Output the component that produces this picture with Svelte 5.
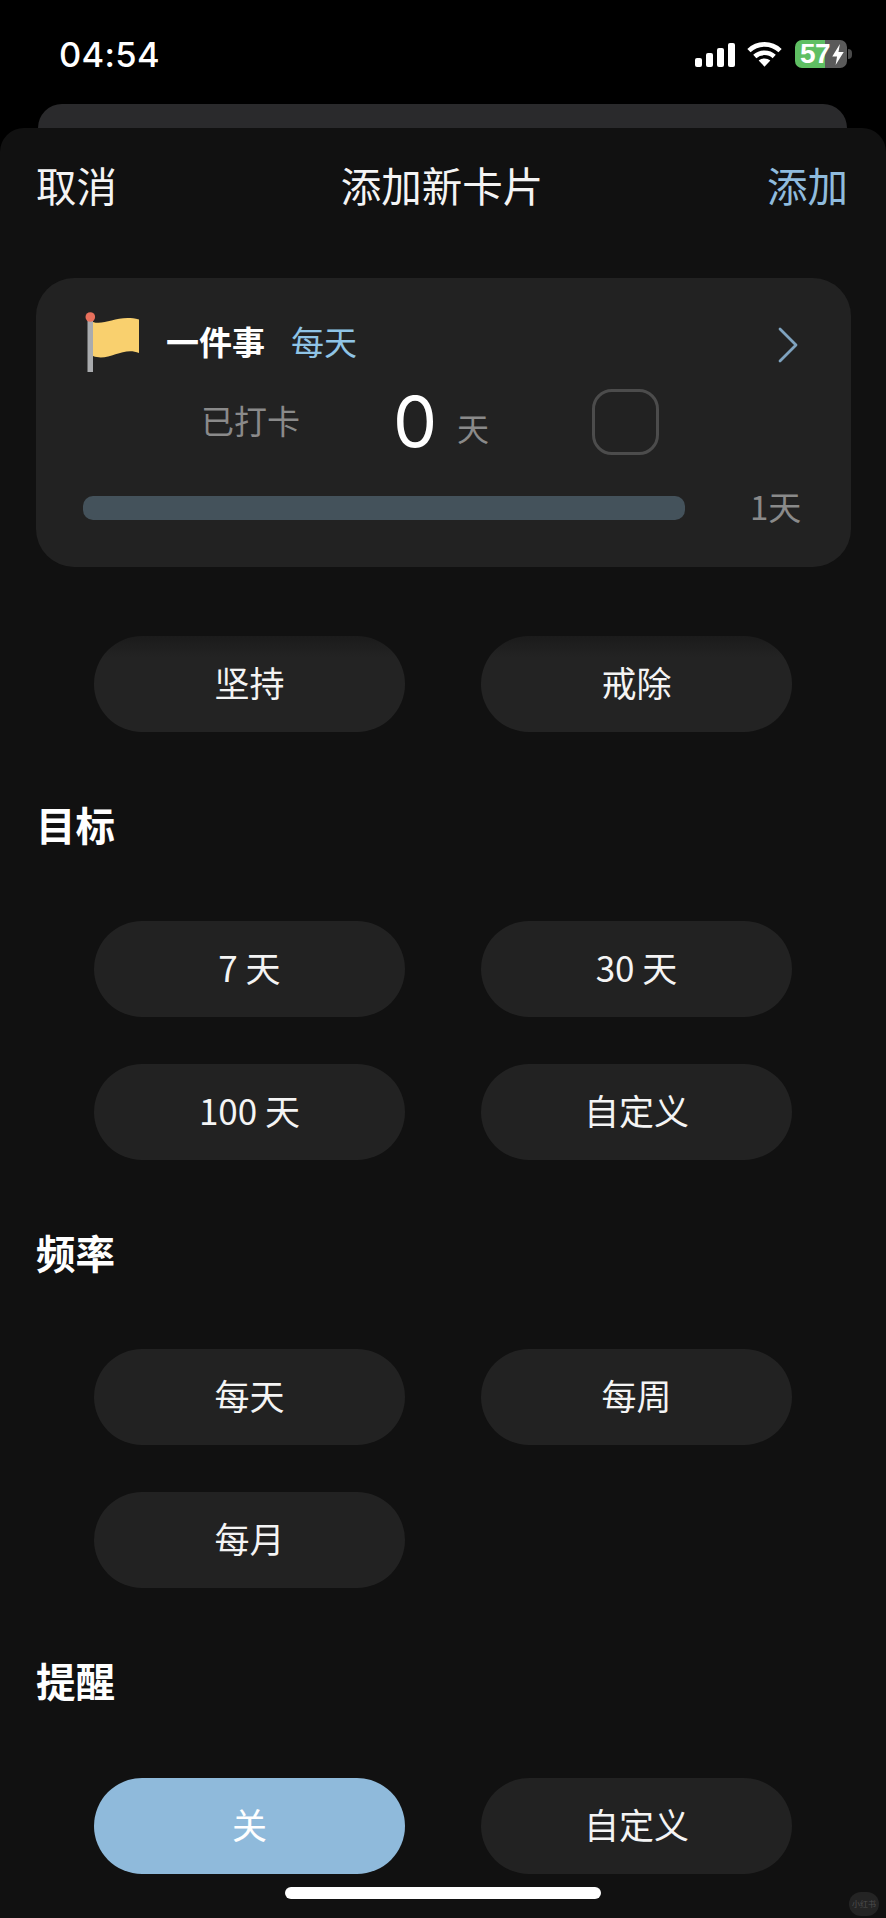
<script>
	const kinds = [{ label: "坚持" }, { label: "戒除" }];
	const sections = [
		{ title: "目标", options: [{ label: "7天", spaced: "7 天" }, { label: "30天", spaced: "30 天" }, { label: "100天", spaced: "100 天" }, { label: "自定义" }] },
		{ title: "频率", options: [{ label: "每天" }, { label: "每周" }, { label: "每月" }] },
		{ title: "提醒", options: [{ label: "关", active: true }, { label: "自定义" }] }
	];
</script>

<div class="screen">
	<header class="status">
		<span class="time">04:54</span>
		<div class="status-icons">
			<svg class="signal" viewBox="0 0 40 24" width="40" height="24" fill="#fff">
				<rect x="0" y="15" width="7" height="9" rx="2" />
				<rect x="11" y="10" width="7" height="14" rx="2" />
				<rect x="22" y="5" width="7" height="19" rx="2" />
				<rect x="33" y="0" width="7" height="24" rx="2" />
			</svg>
			<svg class="wifi" viewBox="0 0 36 26" width="35" height="26" fill="none" stroke="#fff" stroke-width="4.800">
				<path d="M2 9.500C11 1 25 1 34 9.500" />
				<path d="M8 15.500C13.500 10.500 22.500 10.500 28 15.500" />
				<path d="M18 26l-6-6.300c3.400-2.800 8.600-2.800 12 0z" fill="#fff" stroke="none" />
			</svg>
			<div class="battery">
				<div class="battery-body">
					<span class="battery-level">57</span>
					<svg class="bolt" viewBox="0 0 12 22" width="12" height="21" fill="#fff">
						<path d="M8 0L0 13h5l-1.500 9L12 8.500H6.500z" />
					</svg>
				</div>
				<span class="battery-nub"></span>
			</div>
		</div>
	</header>

	<div class="back-card"></div>

	<main class="sheet">
		<nav class="nav">
			<span>取消</span>
			<span>添加新卡片</span>
			<span class="accent">添加</span>
		</nav>

		<section class="card">
			<div class="card-head">
				<svg class="flag" viewBox="0 0 56 60" width="56" height="60">
					<rect x="2.500" y="5" width="5.500" height="55" fill="#a9abae" />
					<path d="M8 10C20 14 33 2 54 7.500V41C38 34 24 50 8 44z" fill="#f9d06e" />
					<circle cx="5.300" cy="5" r="4.800" fill="#e8705c" />
				</svg>
				<span class="habit">一件事</span>
				<span class="habit-freq">每天</span>
				<svg class="chevron" viewBox="0 0 20 36" width="20" height="36" fill="none" stroke="#7fa3bf" stroke-width="2.800" stroke-linecap="round" stroke-linejoin="round">
					<path d="M2 2l16 16L2 34" />
				</svg>
			</div>
			<div class="card-stats">
				<span class="stat-label">已打卡</span>
				<span class="stat-value">0</span>
				<span class="stat-unit">天</span>
				<span class="checkbox"></span>
			</div>
			<div class="card-progress">
				<div class="bar"></div>
				<span class="bar-label">1天</span>
			</div>
		</section>

		<div class="options first">
			{#each kinds as kind}
				<button type="button" class="pill faded">{kind.label}</button>
			{/each}
		</div>

		{#each sections as section}
			<h2 class="heading">{section.title}</h2>
			<div class="options">
				{#each section.options as option}
					<button type="button" class="pill" class:active={option.active}>{option.spaced ?? option.label}</button>
				{/each}
			</div>
		{/each}
	</main>

	<div class="home-bar"></div>
	<div class="watermark">小红书</div>
</div>

<style>
	:global(body) {
		background: #000;
	}

	.screen {
		position: relative;
		width: 886px;
		height: 1918px;
		overflow: hidden;
		background: #000;
		color: #fff;
		font-family: "Noto Sans CJK SC", "Noto Sans", sans-serif;
	}

	.status {
		display: flex;
		justify-content: space-between;
		align-items: center;
		height: 104px;
		padding: 4px 34px 0 59px;
		box-sizing: border-box;
	}

	.time {
		font-family: Inter, "Liberation Sans", sans-serif;
		font-size: 34.500px;
		font-weight: 500;
		letter-spacing: 0.3px;
	}

	.status-icons {
		display: flex;
		align-items: center;
		gap: 12px;
	}

	.signal {
		margin-top: 2px;
	}

	.wifi {
		margin-right: 1px;
	}

	.battery {
		display: flex;
		align-items: center;
		gap: 1px;
	}

	.battery-body {
		display: flex;
		align-items: center;
		width: 52px;
		height: 28px;
		padding-left: 5px;
		box-sizing: border-box;
		border-radius: 7px;
		background: linear-gradient(to right, #5fbf63 58%, #5a5a5a 58%);
	}

	.battery-level {
		font-family: "Liberation Sans", sans-serif;
		font-size: 28px;
		font-weight: 700;
		line-height: 28px;
		letter-spacing: -0.5px;
	}

	.bolt {
		margin-left: 2px;
	}

	.battery-nub {
		width: 4px;
		height: 10px;
		border-radius: 0 4px 4px 0;
		background: #4a4a4a;
	}

	.back-card {
		height: 24px;
		margin: 0 39px 0 38px;
		border-radius: 24px 24px 0 0;
		background: #2a2a2c;
	}

	.sheet {
		height: 1790px;
		border-radius: 24px 24px 0 0;
		background: #111;
		overflow: hidden;
	}

	.nav {
		display: flex;
		justify-content: space-between;
		align-items: center;
		height: 118px;
		padding: 0 38px 4px 36px;
		box-sizing: border-box;
		font-size: 40.500px;
		line-height: 56px;
		color: #f4f4f4;
	}

	.accent {
		color: #8fbbdd;
	}

	.card {
		height: 289px;
		margin: 32px 35px 0 36px;
		padding-left: 47px;
		box-sizing: border-box;
		border-radius: 38px;
		background: #222;
	}

	.card-head {
		display: flex;
		align-items: center;
		height: 60px;
		padding-top: 34px;
	}

	.flag {
		flex: none;
		margin-left: 2px;
	}

	.habit {
		margin-left: 25px;
		padding-bottom: 3px;
		font-size: 33px;
		font-weight: 700;
	}

	.habit-freq {
		margin-left: 26px;
		padding-bottom: 3px;
		font-size: 33px;
		color: #8fc4e6;
	}

	.chevron {
		margin-left: auto;
		margin-right: 53px;
		margin-top: 5px;
	}

	.card-stats {
		display: flex;
		align-items: center;
		height: 66px;
		margin-top: 17px;
		padding-left: 118px;
		color: #8a8a8a;
	}

	.stat-label {
		width: 192px;
		padding-bottom: 4px;
		font-size: 33px;
	}

	.stat-value {
		width: 64px;
		font-family: Inter, "Liberation Sans", sans-serif;
		font-size: 70px;
		font-weight: 400;
		line-height: 66px;
		color: #fff;
	}

	.stat-unit {
		width: 135px;
		padding-top: 10px;
		font-size: 32px;
	}

	.checkbox {
		width: 67px;
		height: 66px;
		box-sizing: border-box;
		border: 3px solid #4c4c4c;
		border-radius: 20px;
	}

	.card-progress {
		display: flex;
		align-items: center;
		margin-top: 41px;
	}

	.bar {
		width: 602px;
		height: 24px;
		border-radius: 10px;
		background: #44525b;
	}

	.bar-label {
		margin-left: 65px;
		margin-top: -5px;
		font-size: 33px;
		line-height: 24px;
		color: #8a8a8a;
	}

	.options {
		display: grid;
		grid-template-columns: 311px 311px;
		column-gap: 76px;
		row-gap: 47px;
		margin-top: 66px;
		padding-left: 94px;
	}

	.options.first {
		margin-top: 69px;
	}

	.options:last-child {
		margin-top: 67px;
	}

	.pill {
		height: 96px;
		padding: 0 0 5px;
		border: none;
		border-radius: 48px;
		background: #222;
		color: #f4f4f4;
		font-family: inherit;
		font-size: 35px;
	}

	.pill.faded {
		background: linear-gradient(to bottom, #1b1b1b, #232323 22%);
	}

	.pill.active {
		background: #8fbadb;
		color: #fff;
	}

	.heading {
		height: 56px;
		margin: 67px 0 0 36px;
		font-size: 39.500px;
		font-weight: 700;
		line-height: 50px;
	}

	.home-bar {
		position: absolute;
		left: 285px;
		top: 1887px;
		width: 316px;
		height: 12px;
		border-radius: 6px;
		background: #fff;
	}

	.watermark {
		position: absolute;
		left: 849px;
		top: 1892px;
		width: 30px;
		height: 24px;
		border-radius: 12px;
		background: #242424;
		color: #4e4e4e;
		font-size: 8px;
		line-height: 24px;
		text-align: center;
	}
</style>
